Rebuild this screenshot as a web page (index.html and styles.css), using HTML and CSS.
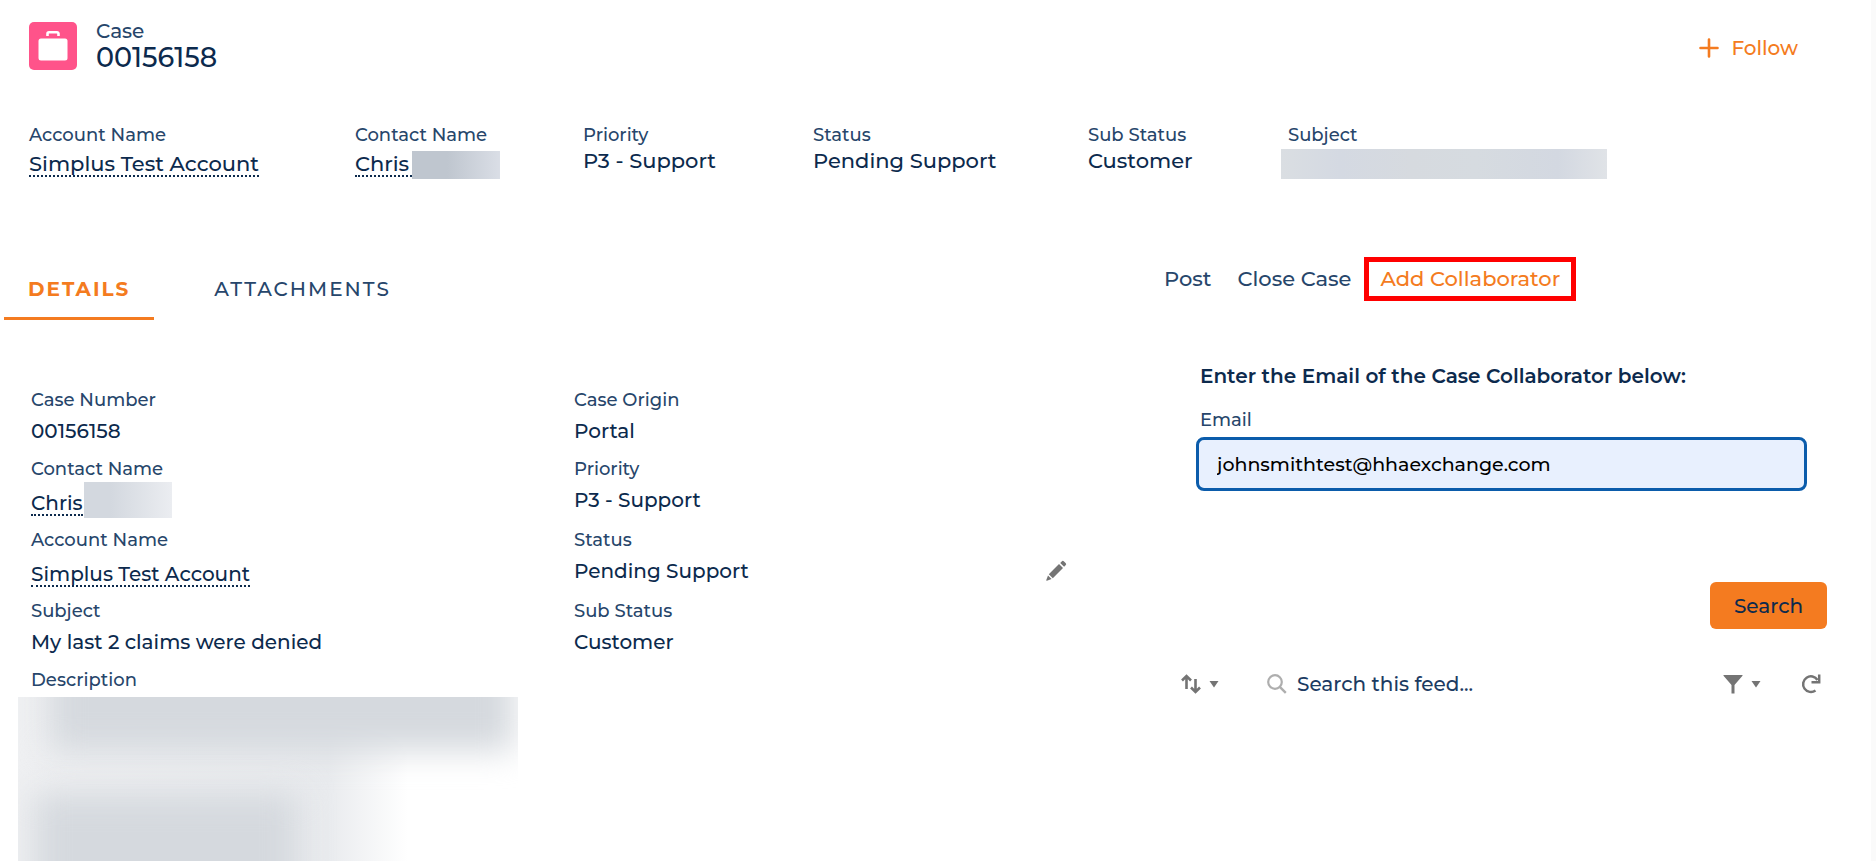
FILE: index.html
```html
<!DOCTYPE html>
<html lang="en">
<head>
  <meta charset="UTF-8">
  <meta name="viewport" content="width=device-width, initial-scale=1">
  <title>Case 00156158</title>
  <link rel="stylesheet" href="styles.css">
</head>
<body>

<header class="case-header">
  <svg class="case-icon" viewBox="0 0 48 48" aria-hidden="true">
    <rect width="48" height="48" rx="5" fill="#ff538a"/>
    <path d="M18.500 14v-2.200a1.500 1.500 0 0 1 1.500-1.500h8a1.500 1.500 0 0 1 1.500 1.500v2.200" fill="none" stroke="#fff" stroke-width="2.600"/>
    <rect x="9.500" y="16.500" width="29" height="22" rx="2.500" fill="#fff"/>
  </svg>
  <div>
    <div class="case-type">Case</div>
    <h1>00156158</h1>
  </div>
  <button type="button" class="follow">
    <svg width="20" height="20" viewBox="0 0 20 20" aria-hidden="true">
      <path d="M10 1.500v17M1.500 10h17" stroke="currentColor" stroke-width="2.600" stroke-linecap="round"/>
    </svg>
    Follow
  </button>
</header>

<dl class="highlights">
  <div>
    <dt>Account Name</dt>
    <dd><a href="#">Simplus Test Account</a></dd>
  </div>
  <div>
    <dt>Contact Name</dt>
    <dd class="contact"><a href="#">Chris&nbsp;</a><span class="redacted redacted-name"></span></dd>
  </div>
  <div>
    <dt>Priority</dt>
    <dd>P3 - Support</dd>
  </div>
  <div>
    <dt>Status</dt>
    <dd>Pending Support</dd>
  </div>
  <div>
    <dt>Sub Status</dt>
    <dd>Customer</dd>
  </div>
  <div>
    <dt>Subject</dt>
    <dd><span class="redacted redacted-subject"></span></dd>
  </div>
</dl>

<div class="columns">
  <main class="record">
    <nav class="tabs">
      <a href="#" class="tab active">Details</a>
      <a href="#" class="tab">Attachments</a>
    </nav>

    <dl class="fields">
      <div>
        <dt>Case Number</dt>
        <dd>00156158</dd>
      </div>
      <div>
        <dt>Case Origin</dt>
        <dd>Portal</dd>
      </div>
      <div>
        <dt>Contact Name</dt>
        <dd class="contact"><a href="#">Chris</a><span class="redacted redacted-name light"></span></dd>
      </div>
      <div>
        <dt>Priority</dt>
        <dd>P3 - Support</dd>
      </div>
      <div>
        <dt>Account Name</dt>
        <dd><a href="#">Simplus Test Account</a></dd>
      </div>
      <div>
        <dt>Status</dt>
        <dd class="editable">
          Pending Support
          <button type="button" class="icon-button" aria-label="Edit Status">
            <svg width="22" height="22" viewBox="0 0 22 22" aria-hidden="true">
              <path d="M3.800 14.200L14 4l4 4L7.800 18.200zM15.200 2.900l1.500-1.500a1.600 1.600 0 0 1 2.300 0l1.600 1.600a1.600 1.600 0 0 1 0 2.300L19.100 6.800zM3 15.400l3.600 3.600-4.700 1.700a.5.500 0 0 1-.6-.6z" fill="#747474"/>
            </svg>
          </button>
        </dd>
      </div>
      <div>
        <dt>Subject</dt>
        <dd>My last 2 claims were denied</dd>
      </div>
      <div>
        <dt>Sub Status</dt>
        <dd>Customer</dd>
      </div>
      <div>
        <dt>Description</dt>
        <dd class="redacted redacted-description"></dd>
      </div>
    </dl>
  </main>

  <aside class="feed">
    <div class="actions">
      <button type="button">Post</button>
      <button type="button">Close Case</button>
      <button type="button" class="active">Add Collaborator</button>
    </div>

    <form class="collaborator">
      <h2>Enter the Email of the Case Collaborator below:</h2>
      <label for="email">Email</label>
      <input type="email" id="email" value="johnsmithtest@hhaexchange.com">
      <button type="button" class="search-button">Search</button>
    </form>

    <div class="feed-bar">
      <button type="button" class="icon-button" aria-label="Sort feed">
        <svg width="20" height="20" viewBox="0 0 20 20" aria-hidden="true">
          <path d="M5.500 15V2.500M1 6.500l4.500-4.500L10 6.500M14.500 5v12.500M10 13.500l4.500 4.500 4.500-4.500" fill="none" stroke="#747474" stroke-width="2.600"/>
        </svg>
        <svg width="10" height="8" viewBox="0 0 10 8" aria-hidden="true">
          <path d="M.5 1h9L5 7.500z" fill="#747474"/>
        </svg>
      </button>
      <div class="feed-search">
        <svg width="20" height="20" viewBox="0 0 20 20" aria-hidden="true">
          <circle cx="8" cy="8" r="6.800" fill="none" stroke="#aeaeae" stroke-width="2.200"/>
          <path d="M12.800 12.800l6 6" stroke="#aeaeae" stroke-width="2.400"/>
        </svg>
        <input type="search" placeholder="Search this feed..." aria-label="Search this feed">
      </div>
      <button type="button" class="icon-button" aria-label="Filter feed">
        <svg width="20" height="20" viewBox="0 0 20 20" aria-hidden="true">
          <path d="M.5 1h19v.8L11.500 11v8.500h-3V11L.5 1.800z" fill="#747474"/>
        </svg>
        <svg width="10" height="8" viewBox="0 0 10 8" aria-hidden="true">
          <path d="M.5 1h9L5 7.500z" fill="#747474"/>
        </svg>
      </button>
      <button type="button" class="icon-button" aria-label="Refresh feed">
        <svg width="20" height="20" viewBox="0 0 20 20" aria-hidden="true">
          <path d="M14.500 16.500A7.800 7.800 0 1 1 16.500 6M18.200.5v7.700h-7.700" fill="none" stroke="#747474" stroke-width="2.500"/>
        </svg>
      </button>
    </div>
  </aside>
</div>

</body>
</html>
```

FILE: styles.css
```css
* {
  box-sizing: border-box;
}

body {
  margin: 0;
  min-height: 100vh;
  font-family: Montserrat, Inter, sans-serif;
  font-size: 20px;
  font-weight: 500;
  line-height: 28px;
  color: #0c2a4d;
  background-color: #fff;
  border-right: 5px solid #fafafa;
  overflow: hidden;
}

h1, h2, dl, dd {
  margin: 0;
}

a {
  color: inherit;
  text-decoration: none;
}

button, input {
  font: inherit;
  color: inherit;
}

button {
  padding: 0;
  border: none;
  background: none;
  cursor: pointer;
}

dt, label {
  font-size: 18px;
  line-height: 24px;
  color: #27466b;
}

dd {
  display: flow-root;
}

dd a {
  display: block;
  width: fit-content;
  margin-top: 6px;
  line-height: 22px;
  border-bottom: 2px dotted #0c2a4d;
}

/* Header */
.case-header {
  display: flex;
  align-items: center;
  gap: 19px;
  padding: 19px 73px 0 29px;
}

.case-icon {
  width: 48px;
  height: 48px;
}

.case-type {
  line-height: 24px;
  color: #27466b;
}

h1 {
  font-size: 27px;
  line-height: 30px;
  font-weight: 500;
}

.follow {
  display: flex;
  align-items: center;
  gap: 12px;
  margin-left: auto;
  padding-top: 4px;
  color: #f47b20;
}

/* Highlights */
.highlights {
  display: grid;
  grid-template-columns: 326fr 228fr 230fr 275fr 200fr 583fr;
  padding: 50px 0 0 29px;
}

.highlights dd {
  font-size: 21px;
}

/* Blurred private data */
.contact {
  display: flex;
  align-items: flex-start;
}

.redacted {
  display: block;
}

.redacted-name {
  width: 88px;
  height: 28px;
  margin: 4px 0 0 -3px;
  background: linear-gradient(to right, #bfc6cf 40%, #dadee6);
}

.redacted-name.light {
  height: 36px;
  margin: -4px 0 -2px 1px;
  background: linear-gradient(to right, #d3d8df 30%, #ebedf1);
}

.redacted-subject {
  width: 326px;
  height: 30px;
  margin: 2px 0 0 -7px;
  background: linear-gradient(to right, #dadee2, #d4d9e2 18%, #d6dadf 40%, #d6dbe0 60%, #d3d8e1 85%, #e0e3e7);
}

/* Two column body */
.columns {
  display: grid;
  grid-template-columns: 1120fr 751fr;
  padding-top: 75px;
}

.tabs {
  display: flex;
  gap: 36px;
  padding: 6px 0 0 4px;
}

.tab {
  padding: 15px 24px 14px;
  border-bottom: 3px solid transparent;
  letter-spacing: 2px;
  text-transform: uppercase;
  color: #27466b;
}

.tab.active {
  font-weight: 700;
  color: #f47b20;
  border-color: #f47b20;
}

.fields {
  display: grid;
  grid-template-columns: 1fr 1fr;
  row-gap: 12px;
  padding: 68px 3px 0 31px;
}

.fields dd {
  margin-top: 5px;
}

.editable {
  display: flex;
  align-items: center;
  justify-content: space-between;
  padding-right: 50px;
}

.fields .redacted-description {
  position: relative;
  width: 500px;
  height: 164px;
  margin-left: -13px;
  overflow: hidden;
  background: linear-gradient(to right, #eff0f2, #e9ebee 62%, #fff 78%);
}

.redacted-description::before,
.redacted-description::after {
  content: "";
  position: absolute;
  background-color: #d5d9de;
  filter: blur(16px);
}

.redacted-description::before {
  top: -40px;
  left: 32px;
  right: 4px;
  height: 94px;
}

.redacted-description::after {
  top: 96px;
  left: 16px;
  width: 264px;
  height: 110px;
}

/* Feed */
.feed {
  padding: 3px 44px 0 44px;
}

.actions {
  display: flex;
  align-items: center;
  gap: 26px;
  font-size: 21px;
}

.actions button {
  color: #27466b;
}

.actions .active {
  height: 44px;
  margin-left: -13px;
  padding: 0 11px;
  color: #f47b20;
  border: 5px solid #f00;
}

.collaborator {
  display: flex;
  flex-direction: column;
  padding: 61px 20px 0 32px;
}

h2 {
  padding-left: 4px;
  font-size: 20px;
  font-weight: 600;
}

label {
  margin: 18px 0 5px 4px;
}

#email {
  height: 54px;
  padding: 0 18px;
  font-size: 19px;
  color: #000;
  background-color: #e8f0fe;
  border: 3px solid #0b5cab;
  border-radius: 8px;
  outline: none;
}

.search-button {
  align-self: flex-end;
  width: 117px;
  height: 47px;
  margin: 91px -20px 0 0;
  border-radius: 6px;
  background-color: #f47b20;
}

.feed-bar {
  display: flex;
  align-items: center;
  gap: 40px;
  padding: 41px 6px 0 17px;
}

.icon-button {
  display: flex;
  align-items: center;
  gap: 8px;
}

.feed-search {
  display: flex;
  flex: 1;
  align-items: center;
  gap: 10px;
  margin-left: 8px;
}

.feed-search input {
  flex: 1;
  height: 28px;
  padding: 0;
  border: none;
  outline: none;
  background: none;
}

.feed-search input::placeholder {
  color: #1c3b62;
  opacity: 1;
}
```
